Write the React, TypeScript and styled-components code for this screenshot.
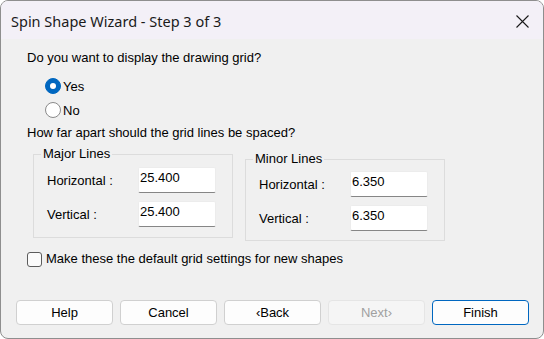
import styled, { createGlobalStyle } from "styled-components";

const GlobalStyle = createGlobalStyle`
  html, body {
    margin: 0;
    padding: 0;
    background: #ffffff;
  }
  * {
    box-sizing: border-box;
  }
`;

const Window = styled.div`
  width: 544px;
  height: 339px;
  border: 1px solid #8e8e8e;
  border-radius: 8px;
  overflow: hidden;
  display: flex;
  flex-direction: column;
  background: #f0f0f0;
  font-family: "Liberation Sans", Arial, sans-serif;
  font-size: 13px;
  color: #000;
`;

const TitleBar = styled.div`
  height: 38px;
  flex: 0 0 38px;
  display: flex;
  align-items: center;
  justify-content: space-between;
  padding-left: 10px;
  background: #f3f0f7;
`;

const Title = styled.span`
  font-family: "Noto Sans", "Open Sans", sans-serif;
  font-size: 14.5px;
  color: #1a1a1a;
  margin-top: 2px;
`;

const CloseIcon = styled.svg`
  width: 13px;
  height: 13px;
  margin-right: 14px;
  margin-top: 2px;
`;

const Content = styled.div`
  flex: 1;
  display: flex;
  flex-direction: column;
  padding-left: 26px;
`;

const TextLine = styled.div<{ $top: number }>`
  line-height: 16px;
  margin-top: ${(p) => p.$top}px;
`;

const RadioList = styled.div`
  display: flex;
  flex-direction: column;
  padding-left: 18px;
  margin-top: 8px;
`;

const RadioRow = styled.label`
  display: flex;
  align-items: center;
  height: 24px;
`;

const RadioDot = styled.span<{ $checked?: boolean }>`
  width: 16px;
  height: 16px;
  border-radius: 50%;
  margin-right: 2px;
  display: flex;
  align-items: center;
  justify-content: center;
  background: ${(p) => (p.$checked ? "#0067c0" : "#ffffff")};
  border: 1px solid ${(p) => (p.$checked ? "#0067c0" : "#8a8a8a")};

  &::after {
    content: "";
    display: ${(p) => (p.$checked ? "block" : "none")};
    width: 6px;
    height: 6px;
    border-radius: 50%;
    background: #ffffff;
  }
`;

const Groups = styled.div`
  display: flex;
  align-items: flex-start;
  gap: 12px;
  margin-top: 13px;
  margin-left: 6px;
`;

const Group = styled.div<{ $offset: number }>`
  width: 200px;
  border: 1px solid #dcdcdc;
  display: flex;
  flex-direction: column;
  margin-top: ${(p) => p.$offset}px;
`;

const Legend = styled.span`
  align-self: flex-start;
  line-height: 16px;
  margin: -9px 0 0 7px;
  padding: 0 2px;
  background: #f0f0f0;
`;

const Rows = styled.div<{ $top: number; $bottom: number }>`
  display: flex;
  flex-direction: column;
  gap: 8px;
  padding: ${(p) => p.$top}px 0 ${(p) => p.$bottom}px 13px;
`;

const FieldRow = styled.div`
  display: flex;
  align-items: center;
`;

const FieldLabel = styled.span`
  width: 91px;
`;

const NumberInput = styled.input`
  width: 78px;
  height: 26px;
  border: 1px solid #ececec;
  border-bottom: 1px solid #868686;
  border-radius: 2px;
  background: #ffffff;
  padding: 0 0 6px 1px;
  font-family: "Liberation Sans", Arial, sans-serif;
  font-size: 13px;
  color: #000;
  outline: none;
`;

const CheckRow = styled.label`
  display: flex;
  align-items: center;
  gap: 4px;
  margin-top: 10px;
  line-height: 16px;
`;

const CheckBox = styled.span`
  width: 15px;
  height: 15px;
  border: 1px solid #5c5c5c;
  border-radius: 3px;
  background: #fbfbfb;
`;

const Footer = styled.div`
  margin-top: auto;
  display: flex;
  gap: 7px;
  padding: 0 0 13px 15px;
`;

const Button = styled.button<{ $primary?: boolean }>`
  width: 97px;
  height: 25px;
  border-radius: 4px;
  font-family: "Liberation Sans", Arial, sans-serif;
  font-size: 13px;
  padding: 0;
  background: ${(p) => (p.disabled ? "#f5f5f5" : "#fdfdfd")};
  color: ${(p) => (p.disabled ? "#a0a0a0" : "#000")};
  border: 1px solid
    ${(p) => (p.$primary ? "#0067c0" : p.disabled ? "#e5e5e5" : "#d0d0d0")};
`;

const fields = {
  major: [
    ["Horizontal :", "25.400"],
    ["Vertical :", "25.400"],
  ],
  minor: [
    ["Horizontal :", "6.350"],
    ["Vertical :", "6.350"],
  ],
};

export default function App() {
  return (
    <>
      <GlobalStyle />
      <Window>
        <TitleBar>
          <Title>Spin Shape Wizard - Step 3 of 3</Title>
          <CloseIcon viewBox="0 0 13 13">
            <path d="M0.5 0.5 L12.5 12.5 M12.5 0.5 L0.5 12.5" stroke="#1a1a1a" strokeWidth="1.1" />
          </CloseIcon>
        </TitleBar>
        <Content>
          <TextLine $top={11}>Do you want to display the drawing grid?</TextLine>
          <RadioList>
            <RadioRow>
              <RadioDot $checked />
              Yes
            </RadioRow>
            <RadioRow>
              <RadioDot />
              No
            </RadioRow>
          </RadioList>
          <TextLine $top={3}>How far apart should the grid lines be spaced?</TextLine>
          <Groups>
            <Group $offset={0}>
              <Legend>Major Lines</Legend>
              <Rows $top={5} $bottom={10}>
                {fields.major.map(([label, value]) => (
                  <FieldRow key={label}>
                    <FieldLabel>{label}</FieldLabel>
                    <NumberInput defaultValue={value} />
                  </FieldRow>
                ))}
              </Rows>
            </Group>
            <Group $offset={5}>
              <Legend>Minor Lines</Legend>
              <Rows $top={4} $bottom={9}>
                {fields.minor.map(([label, value]) => (
                  <FieldRow key={label}>
                    <FieldLabel>{label}</FieldLabel>
                    <NumberInput defaultValue={value} />
                  </FieldRow>
                ))}
              </Rows>
            </Group>
          </Groups>
          <CheckRow>
            <CheckBox />
            Make these the default grid settings for new shapes
          </CheckRow>
        </Content>
        <Footer>
          <Button>Help</Button>
          <Button>Cancel</Button>
          <Button>&lsaquo;Back</Button>
          <Button disabled>Next&rsaquo;</Button>
          <Button $primary>Finish</Button>
        </Footer>
      </Window>
    </>
  );
}
